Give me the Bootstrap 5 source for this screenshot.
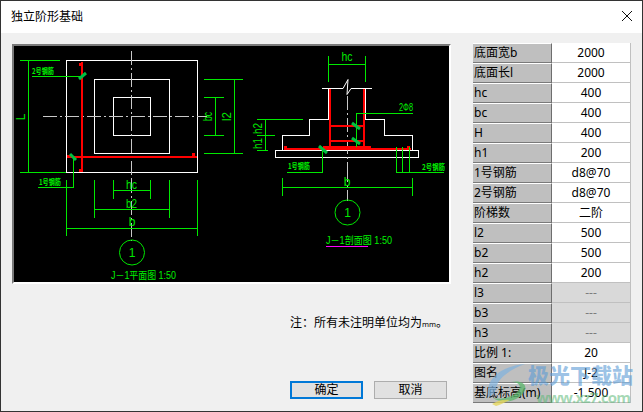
<!DOCTYPE html>
<html lang="zh"><head><meta charset="utf-8"><title>独立阶形基础</title>
<link href="https://cdn.jsdelivr.net/npm/bootstrap@5.3.0/dist/css/bootstrap.min.css" rel="stylesheet">
<style>
html,body{margin:0;height:412px;overflow:hidden;background:#f0f0f0}
body{font-family:"Noto Sans","Noto Sans CJK SC",sans-serif;font-size:12px;line-height:1;color:#000}
.dlg{height:412px;border:1px solid #333;background:#f0f0f0;position:relative;overflow:hidden}
.dlg-title{height:32px;background:#fff;padding-left:10px;padding-right:10px}
.dlg-close{margin-bottom:3px}
.dlg-body{padding:10px 10px 0 11px;gap:21px}
.cad-col{width:440px;margin-top:1px}
.cad-frame{width:439px;height:240px;border:2px solid #fff;border-top-color:#7a7a7a;border-left-color:#7a7a7a;background:#000;line-height:0}
.cad-frame svg{display:block}
.note{margin:33px 4px 0 0;text-align:right;height:12px;line-height:12px}
.note-mm{font-size:7.5px}
.btn-row{margin-top:52px;margin-right:5px;gap:11px}
.btn.dlg-btn{width:73px;height:18px;padding:0;font-size:12px;line-height:1;background:#e1e1e1;border:1px solid #adadad;border-radius:0;color:#000}
.btn.dlg-btn.dlg-on{border:2px solid #0078d7}
.ptable{width:158px;border-collapse:separate;border-spacing:0;table-layout:fixed;border-right:1px solid #c0c0c0;background:#fff}
.ptable td{height:20px;padding:0;vertical-align:middle;font-size:12px;line-height:1;white-space:nowrap;overflow:hidden}
.ptable .plabel{width:79px;background:#bfbfbf;padding-left:1px;border-top:1px solid #fff;border-bottom:1px solid #7a7a7a;border-right:1px solid #6e6e6e}
.ptable .pval{text-align:center;background:#fff;border-bottom:1px solid #c0c0c0}
.ptable .poff{background:#d9d9d9;color:#7d7d7d}
.wm{position:absolute;left:484px;top:362px;width:152px;height:44px;pointer-events:none}
.wm svg{display:block}
.cadt{font-family:"Liberation Sans","Noto Sans CJK SC",sans-serif;fill:#00f000;font-size:10px}
.cadc{font-family:"Noto Sans CJK SC",sans-serif;fill:#00f000;font-size:8px;font-weight:700}
.cadl{font-family:"Liberation Sans",sans-serif;fill:#00e800;font-size:12px}
.wmt{font-family:"Noto Sans CJK SC",sans-serif;font-weight:900;font-size:21px;fill:#5b9bd5;fill-opacity:.6}
.wmu{font-family:"Open Sans",sans-serif;font-weight:700;font-size:15px;fill:#5bb877;fill-opacity:.55}
</style></head><body>
<div class="dlg">
<div class="dlg-title d-flex align-items-center justify-content-between"><span>独立阶形基础</span>
<svg class="dlg-close" width="10" height="10" viewBox="0 0 10 10"><path d="M0 0l10 10M10 0L0 10" stroke="#111" stroke-width="1" fill="none"/></svg></div>
<div class="dlg-body d-flex align-items-start">
<div class="cad-col">
<div class="cad-frame">
<svg width="435" height="236" viewBox="14 46 435 236" fill="none" shape-rendering="crispEdges">
<g stroke="#fff" stroke-width="1">
<rect x="66.5" y="60.5" width="131" height="112"/><rect x="94.5" y="79.5" width="75" height="74"/><rect x="113.5" y="97.5" width="37" height="38"/>
<path d="M322 88.500h21M351 88.500h21M328.500 88v31.500M365.500 88v31.500M328.500 119.500h-19v16h-27v15M365.500 119.500h19v16h28v15"/>
<path d="M343 88.500l5-9-1 15 4-6" shape-rendering="auto"/>
<rect x="275.5" y="150.5" width="143" height="7"/>
</g>
<path d="M43 116.500h164M131.500 51v128M131.500 179v62M347.500 96v72M347.500 168v33" stroke="#c8c8c8" stroke-dasharray="14 3 2 3"/>
<g stroke="#ff0000" stroke-width="2">
<path d="M81.500 62v110M68 156.500h129M330 89v60M364 89v60M330 125.500h34M330 140.500h34"/>
<path d="M284 148.500h127"/><path d="M323 147h48" stroke-width="3"/>
</g>
<g fill="#ff0000" stroke="none"><rect x="79" y="63" width="3" height="3"/><rect x="79" y="169" width="3" height="3"/><rect x="67" y="155" width="4" height="3"/><rect x="192" y="153" width="3" height="3"/><rect x="284" y="146" width="3" height="3"/><rect x="407" y="146" width="3" height="3"/></g>
<g stroke="#00e800" stroke-width="1">
<path d="M20 60.500h40M20 172.500h46M28.500 60v113M32 76.500h50M38 187.500h35.500v-30M204 79.500h39M204 97.500h20M204 135.500h20M204 153.500h39M215.500 97v39M234.500 79v75"/>
<path d="M66.500 180v56M94.500 180v38M113.500 180v19M150.500 180v19M169.500 180v38M197.500 180v56M113 190.500h38M94 209.500h76M66 228.500h132"/>
<path d="M328.500 56v26M365.500 56v26M328 64.500h38M356.500 147v-33.500h56M265.500 119v31M257 119.500h46M257 135.500h18M257 150.500h11M322.500 150v22.500h-35.500M396.500 147v25.500h47.500M402.500 147v25M409.500 147v25M282.500 178v18M412.500 178v18M282 187.500h131"/>
</g>
<g fill="none" stroke="#00e800" shape-rendering="auto"><circle cx="132" cy="252.500" r="12.500"/><circle cx="347.500" cy="212.500" r="12.500"/></g>
<g stroke="#00c040" stroke-width="3" shape-rendering="auto"><path d="M79 79l7-6M70 154l6 6M352 123l8 6M352 138l8 6M319 146l8 7"/></g>
<path d="M326 246.500h42" stroke="#ff00ff" stroke-width="1"/>
<text class="cadc" x="32" y="74" textLength="22" lengthAdjust="spacingAndGlyphs">2号钢筋</text>
<text class="cadc" x="39" y="185" textLength="22" lengthAdjust="spacingAndGlyphs">1号钢筋</text>
<text class="cadc" x="288" y="169" textLength="22" lengthAdjust="spacingAndGlyphs">1号钢筋</text>
<text class="cadc" x="422" y="170" textLength="23" lengthAdjust="spacingAndGlyphs">2号钢筋</text>
<text class="cadt" x="399" y="111" textLength="14" lengthAdjust="spacingAndGlyphs">2Φ8</text>
<text class="cadl" x="126" y="189" textLength="11" lengthAdjust="spacingAndGlyphs">hc</text>
<text class="cadl" x="126" y="208" textLength="11" lengthAdjust="spacingAndGlyphs">b2</text>
<text class="cadl" x="132" y="226" text-anchor="middle">b</text>
<text class="cadl" x="341.500" y="61" textLength="11" lengthAdjust="spacingAndGlyphs">hc</text>
<text class="cadl" x="347" y="186" text-anchor="middle">b</text>
<text class="cadl" x="132" y="257" text-anchor="middle">1</text>
<text class="cadl" x="347.500" y="217" text-anchor="middle">1</text>
<text class="cadl" transform="translate(25 117) rotate(-90)" text-anchor="middle">L</text>
<text class="cadl" transform="translate(212 121) rotate(-90)" textLength="9" lengthAdjust="spacingAndGlyphs">bc</text>
<text class="cadl" transform="translate(231 121) rotate(-90)" textLength="9" lengthAdjust="spacingAndGlyphs">l2</text>
<text class="cadl" transform="translate(262 134) rotate(-90)" textLength="11" lengthAdjust="spacingAndGlyphs">h2</text>
<text class="cadl" transform="translate(262 149) rotate(-90)" textLength="11" lengthAdjust="spacingAndGlyphs">h1</text>
<text class="cadt" x="111" y="279" textLength="65" lengthAdjust="spacingAndGlyphs">J－1平面图 1:50</text>
<text class="cadt" x="326" y="244" textLength="66" lengthAdjust="spacingAndGlyphs">J－1剖面图 1:50</text>
</svg>
</div>
<div class="note">注：所有未注明单位均为<span class="note-mm">mm</span>。</div>
<div class="btn-row d-flex justify-content-end">
<button type="button" class="btn dlg-btn dlg-on">确定</button>
<button type="button" class="btn dlg-btn">取消</button>
</div>
</div>
<table class="ptable"><tbody>
<tr><td class="plabel">底面宽b</td><td class="pval">2000</td></tr>
<tr><td class="plabel">底面长l</td><td class="pval">2000</td></tr>
<tr><td class="plabel">hc</td><td class="pval">400</td></tr>
<tr><td class="plabel">bc</td><td class="pval">400</td></tr>
<tr><td class="plabel">H</td><td class="pval">400</td></tr>
<tr><td class="plabel">h1</td><td class="pval">200</td></tr>
<tr><td class="plabel">1号钢筋</td><td class="pval">d8@70</td></tr>
<tr><td class="plabel">2号钢筋</td><td class="pval">d8@70</td></tr>
<tr><td class="plabel">阶梯数</td><td class="pval">二阶</td></tr>
<tr><td class="plabel">l2</td><td class="pval">500</td></tr>
<tr><td class="plabel">b2</td><td class="pval">500</td></tr>
<tr><td class="plabel">h2</td><td class="pval">200</td></tr>
<tr><td class="plabel">l3</td><td class="pval poff">---</td></tr>
<tr><td class="plabel">b3</td><td class="pval poff">---</td></tr>
<tr><td class="plabel">h3</td><td class="pval poff">---</td></tr>
<tr><td class="plabel">比例 1:</td><td class="pval">20</td></tr>
<tr><td class="plabel">图名</td><td class="pval">J-2</td></tr>
<tr><td class="plabel">基底标高(m)</td><td class="pval">-1.500</td></tr>
</tbody></table>
</div>
<div class="wm"><svg width="152" height="44" viewBox="0 0 152 44">
<path d="M3 34C0 16 16 3 40 1 27 6 14 13 11 25 10 30 7 34 3 34Z" fill="#7fb2de" fill-opacity=".7"/>
<path d="M8 35c8 6 26 5 32-8 2-6-4-10-14-8 8 0 11 4 7 9-5 6-16 9-25 7Z" fill="#59b56b" fill-opacity=".75"/>
<path d="M7 41c6-4 12-5 18-4-5 2-10 5-14 6Z" fill="#e3d55b" fill-opacity=".8"/>
<text class="wmt" x="43" y="20" textLength="105">极光下载站</text>
<text class="wmu" x="51" y="40" textLength="95">www.xz7.com</text>
</svg></div>
</div>
</body></html>
